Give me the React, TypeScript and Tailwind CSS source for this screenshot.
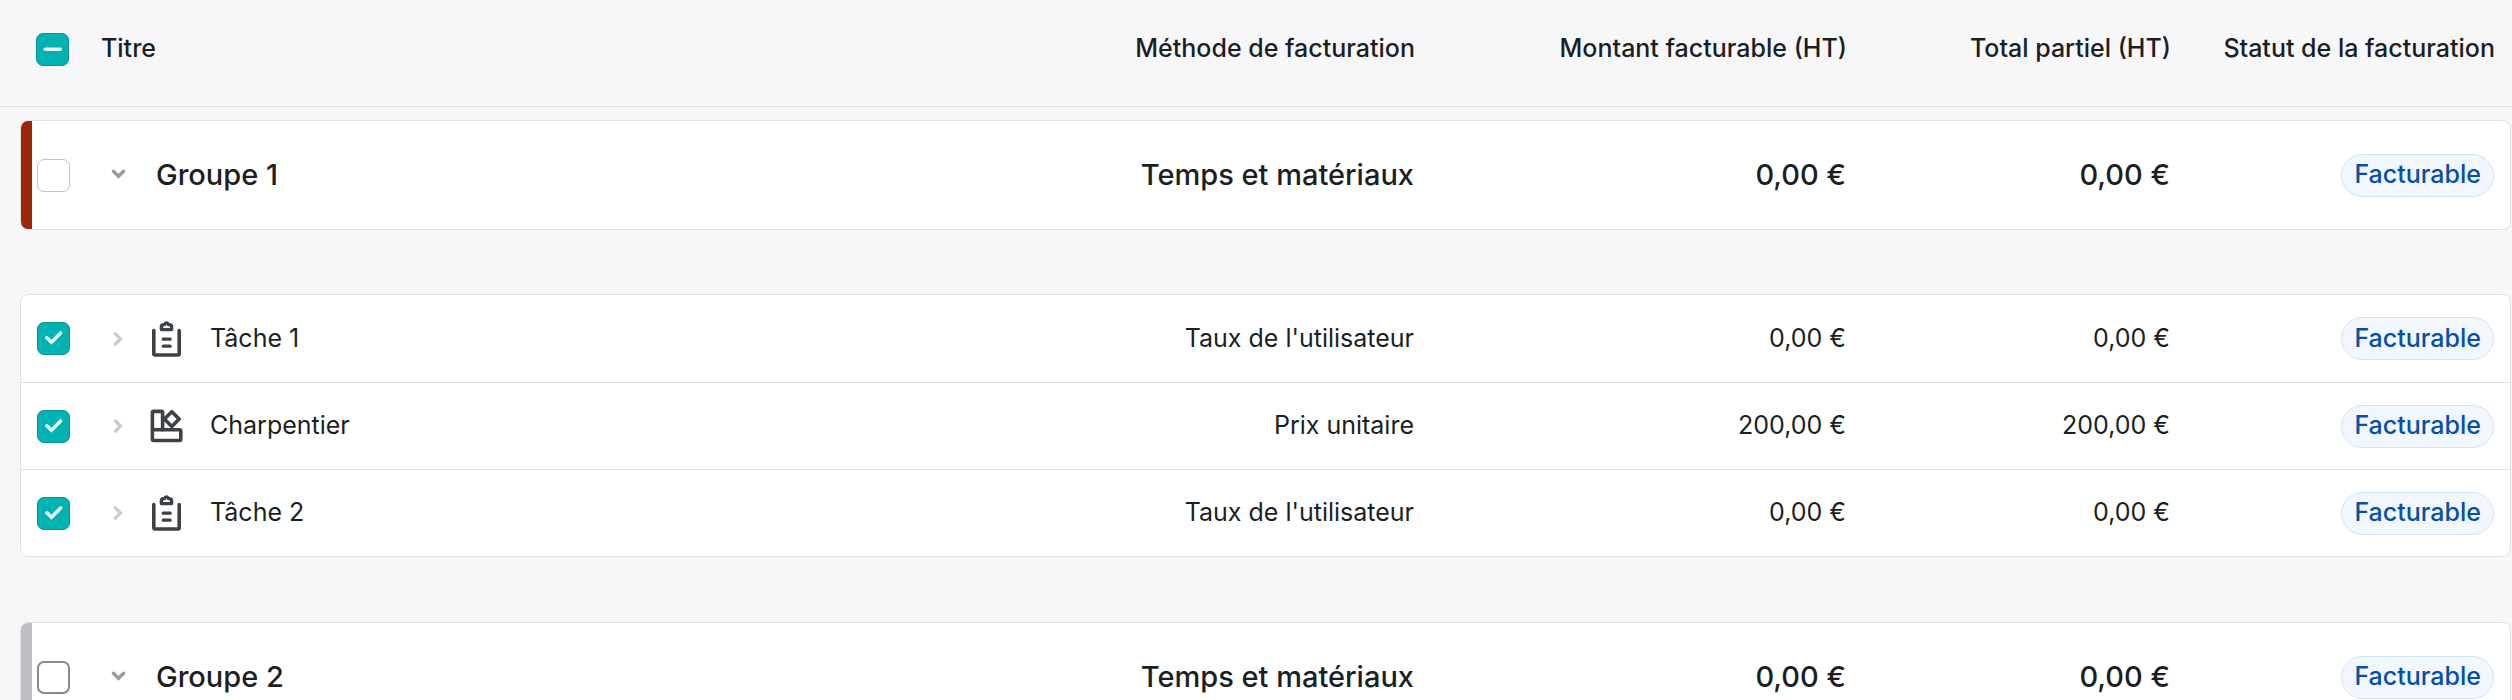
import { useEffect, useRef, useState } from "react";
import clsx from "clsx";

type TaskKind = "task" | "unit";

interface Task {
  id: string;
  title: string;
  kind: TaskKind;
  method: string;
  billable: string;
  subtotal: string;
}

interface Group {
  id: string;
  title: string;
  color: "red" | "gray";
  tasks: Task[];
}

const groups: Group[] = [
  {
    id: "g1",
    title: "Groupe 1",
    color: "red",
    tasks: [
      { id: "t1", title: "Tâche 1", kind: "task", method: "Taux de l'utilisateur", billable: "0,00 €", subtotal: "0,00 €" },
      { id: "t2", title: "Charpentier", kind: "unit", method: "Prix unitaire", billable: "200,00 €", subtotal: "200,00 €" },
      { id: "t3", title: "Tâche 2", kind: "task", method: "Taux de l'utilisateur", billable: "0,00 €", subtotal: "0,00 €" },
    ],
  },
  { id: "g2", title: "Groupe 2", color: "gray", tasks: [] },
];

const rowGrid = "grid grid-cols-[minmax(0,1fr)_400px_432px_324px_324px] items-center";

interface CheckboxProps {
  label: string;
  checked: boolean;
  indeterminate?: boolean;
  strong?: boolean;
  onChange: (checked: boolean) => void;
}

function Checkbox({ label, checked, indeterminate = false, strong = false, onChange }: CheckboxProps) {
  const ref = useRef<HTMLInputElement>(null);
  const filled = checked || indeterminate;

  useEffect(() => {
    if (ref.current) ref.current.indeterminate = indeterminate;
  }, [indeterminate]);

  return (
    <span className="relative block size-[33px] shrink-0">
      <input
        ref={ref}
        type="checkbox"
        aria-label={label}
        checked={checked}
        onChange={(e) => onChange(e.target.checked)}
        className={clsx(
          "block size-full cursor-pointer appearance-none rounded-[7px]",
          filled && "border border-[#0a9294] bg-[#00b2b2]",
          !filled && strong && "border-2 border-[#8a8993] bg-white",
          !filled && !strong && "border border-[#c2c2c6] bg-white"
        )}
      />
      {filled && (
        <svg
          viewBox="0 0 33 33"
          fill="none"
          stroke="#e6f8f8"
          strokeWidth="3.6"
          strokeLinecap="round"
          className="pointer-events-none absolute inset-0 size-full"
        >
          {indeterminate ? <path d="M9.3 16.2H24.2" /> : <path d="M9.8 15.8 14.5 20.3 23.6 11" />}
        </svg>
      )}
    </span>
  );
}

function Chevron({ open, label }: { open: boolean; label: string }) {
  return (
    <button type="button" aria-label={label} aria-expanded={open} className="ml-[37px] size-6 shrink-0 cursor-pointer">
      <svg
        viewBox="0 0 24 24"
        fill="none"
        stroke={open ? "#9a99a2" : "#cbcbd0"}
        strokeWidth="3.4"
        strokeLinecap="round"
        className="size-6"
      >
        <path d={open ? "M6.4 8.2 11.5 13.3 16.6 8.2" : "M8.4 6.9 13.5 12 8.4 17.1"} />
      </svg>
    </button>
  );
}

function TaskIcon({ kind }: { kind: TaskKind }) {
  return (
    <svg
      viewBox="0 0 36 36"
      fill="none"
      stroke="#3d4246"
      strokeWidth="3.6"
      strokeLinecap="round"
      strokeLinejoin="round"
      className="ml-[18px] size-9 shrink-0"
    >
      {kind === "task" ? (
        <>
          <path d="M4.8 9.6V32.6Q4.8 34 6.2 34H28.8Q30.2 34 30.2 32.6V9.6" />
          <path d="M14.2 18.2H21.2M14.2 25.2H21.2" strokeWidth="3.2" />
          <path d="M12.4 8.6V5.6Q12.4 4.2 13.8 4L15.6 3.4Q17.5 .4 19.4 3.4L21.2 4Q22.6 4.2 22.6 5.6V8.6Z" strokeWidth="3.4" />
        </>
      ) : (
        <>
          <path d="M3.4 21.7V4.6Q3.4 3.4 4.6 3.4H12.4Q13.6 3.4 13.6 4.6V21.7" />
          <rect x="3.4" y="21.7" width="28.4" height="10.8" rx="1.2" />
          <path d="M22.8 3.7 30.2 11.1 22.8 18.5 15.4 11.1Z" />
        </>
      )}
    </svg>
  );
}

function StatusBadge() {
  return (
    <span className="inline-flex h-[43px] items-center rounded-full border border-[#cce3f9] bg-[#f2f7fe] px-3 font-medium text-[#064fa8]">
      Facturable
    </span>
  );
}

export default function App() {
  const [selected, setSelected] = useState<string[]>(["t1", "t2", "t3"]);
  const allIds = groups.flatMap((g) => [g.id, ...g.tasks.map((t) => t.id)]);
  const allSelected = selected.length === allIds.length;

  const toggle = (id: string, checked: boolean) => {
    setSelected((prev) => (checked ? [...prev, id] : prev.filter((x) => x !== id)));
  };

  return (
    <main className="h-screen overflow-hidden bg-[#f7f7f9] font-['Inter',sans-serif] text-[25px] text-[#1b1f23]">
      <table className="block w-full">
        <thead className="block border-b border-[#e1e1e4] pb-2">
          <tr className={clsx(rowGrid, "min-h-[98px] pr-[17px] pl-9 text-right")}>
            <th className="flex items-center gap-8 font-medium">
              <Checkbox
                label="Tout sélectionner"
                checked={allSelected}
                indeterminate={selected.length > 0 && !allSelected}
                onChange={(checked) => setSelected(checked ? allIds : [])}
              />
              Titre
            </th>
            <th className="font-medium">Méthode de facturation</th>
            <th className="font-medium">Montant facturable (HT)</th>
            <th className="font-medium">Total partiel (HT)</th>
            <th className="font-medium">Statut de la facturation</th>
          </tr>
        </thead>

        {groups.map((group, index) => [
          <tbody
            key={group.id}
            className={clsx(
              "mr-px ml-5 block overflow-hidden rounded-lg border border-[#e1e1e4] bg-white",
              index === 0 ? "mt-[13px]" : "mt-[65px]"
            )}
          >
            <tr
              className={clsx(
                rowGrid,
                "min-h-[108px] border-l-[11px] pr-4 text-right text-[29px] font-medium",
                group.color === "red" ? "border-[#9b2608]" : "border-[#bfbec3]"
              )}
            >
              <td className="flex items-center pl-[5px]">
                <Checkbox
                  label={group.title}
                  strong={group.color === "gray"}
                  checked={selected.includes(group.id)}
                  onChange={(checked) => toggle(group.id, checked)}
                />
                <Chevron open label={`Replier ${group.title}`} />
                <span className="ml-[25px]">{group.title}</span>
              </td>
              <td>Temps et matériaux</td>
              <td>0,00 €</td>
              <td>0,00 €</td>
              <td className="flex justify-end text-[25px]">
                <StatusBadge />
              </td>
            </tr>
          </tbody>,
          group.tasks.length > 0 && (
            <tbody
              key={`${group.id}-tasks`}
              className="mt-16 mr-px ml-5 block overflow-hidden rounded-lg border border-[#e1e1e4] bg-white"
            >
              {group.tasks.map((task) => (
                <tr
                  key={task.id}
                  className={clsx(rowGrid, "min-h-[87px] border-t border-[#e1e1e4] pr-4 text-right first:border-t-0")}
                >
                  <td className="flex items-center pl-4">
                    <Checkbox
                      label={task.title}
                      checked={selected.includes(task.id)}
                      onChange={(checked) => toggle(task.id, checked)}
                    />
                    <Chevron open={false} label={`Déplier ${task.title}`} />
                    <TaskIcon kind={task.kind} />
                    <span className="ml-[25px]">{task.title}</span>
                  </td>
                  <td>{task.method}</td>
                  <td>{task.billable}</td>
                  <td>{task.subtotal}</td>
                  <td className="flex justify-end">
                    <StatusBadge />
                  </td>
                </tr>
              ))}
            </tbody>
          ),
        ])}
      </table>
    </main>
  );
}
